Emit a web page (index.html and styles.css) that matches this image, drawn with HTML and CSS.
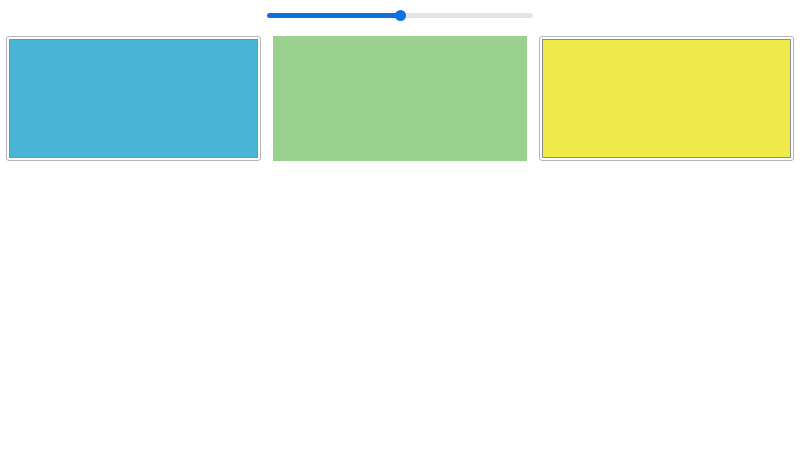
FILE: index.html
```html
<!DOCTYPE html>
<html lang="en">
<head>
  <meta charset="UTF-8">
  <meta name="viewport" content="width=device-width, initial-scale=1.0">
  <title>Swatches</title>
  <link rel="stylesheet" href="styles.css">
</head>
<body>
  <div class="toolbar">
    <input type="range" class="slider" min="0" max="100" value="50">
  </div>

  <div class="swatches">
    <div class="swatch selected">
      <div class="fill blue"></div>
    </div>
    <div class="swatch">
      <div class="fill green"></div>
    </div>
    <div class="swatch selected">
      <div class="fill yellow"></div>
    </div>
  </div>
</body>
</html>
```

FILE: styles.css
```css
body {
  margin: 0;
  padding: 0;
  background: #fff;
  font-family: "Liberation Sans", Arial, sans-serif;
}

.toolbar {
  display: flex;
  justify-content: center;
  align-items: center;
  height: 30px;
}

/* thin track, filled up to the thumb */
.slider {
  -webkit-appearance: none;
  appearance: none;
  width: 266px;
  height: 5px;
  margin: 0;
  border-radius: 3px;
  background: linear-gradient(to right, #1070e0 50%, #e4e4e4 50%);
}

.slider::-webkit-slider-thumb {
  -webkit-appearance: none;
  width: 11px;
  height: 11px;
  border-radius: 50%;
  background: #1070e0;
  border: none;
}

.swatches {
  display: grid;
  grid-template-columns: repeat(3, 1fr);
  gap: 12px;
  padding: 6px;
}

.swatch {
  height: 125px;
  box-sizing: border-box;
  display: flex;
}

.swatch.selected {
  border: 1px solid #b4b4b4;
  border-radius: 3px;
  padding: 2px;
}

.fill {
  flex: 1;
}

.selected .fill {
  border: 1px solid #8c8c8c;
}

.blue {
  background: #49b4d5;
}

.green {
  background: #9bd18e;
}

.yellow {
  background: #eeea4a;
}
```
